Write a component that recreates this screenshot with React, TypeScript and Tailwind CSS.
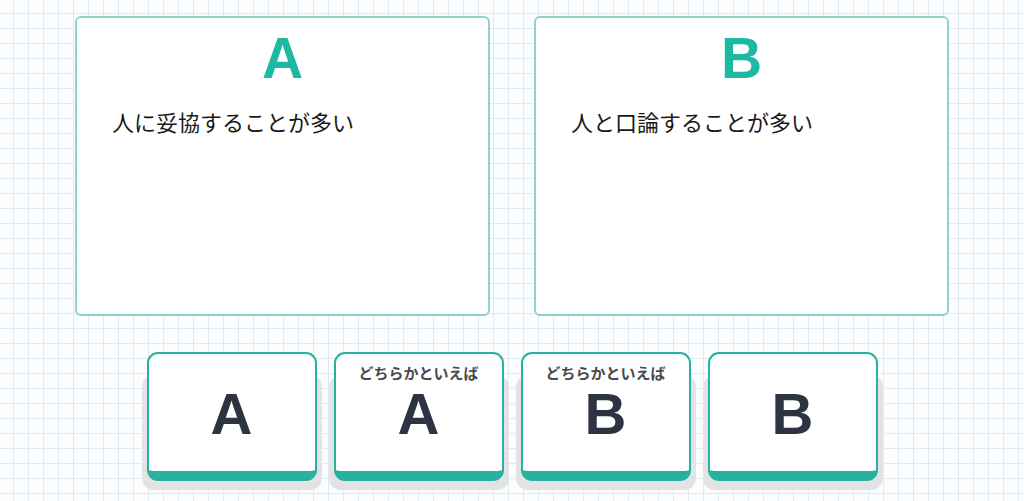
const choices = [
  { letter: "A", label: "" },
  { letter: "A", label: "どちらかといえば" },
  { letter: "B", label: "どちらかといえば" },
  { letter: "B", label: "" },
];

const panels = [
  { letter: "A", text: "人に妥協することが多い" },
  { letter: "B", text: "人と口論することが多い" },
];

export default function App() {
  return (
    <div className="min-h-screen w-full bg-[#fbfdfe] bg-[linear-gradient(to_right,#dfebf1_1px,transparent_1px),linear-gradient(to_bottom,#dfebf1_1px,transparent_1px)] bg-[size:15px_15px] bg-[position:13px_13px] pt-4 font-['Noto_Sans_CJK_JP',sans-serif]">
      <div className="flex justify-center gap-[44px]">
        {panels.map((p) => (
          <div
            key={p.letter}
            className="flex h-[300px] w-[415px] flex-col rounded-[6px] border-2 border-[#8ed3cb] bg-white"
          >
            <div className="pt-[12px] text-center font-['Liberation_Sans',sans-serif] text-[57px] leading-none font-bold text-[#1fb9a3]">
              {p.letter}
            </div>
            <div className="mt-[18px] pl-[35px] text-[22px] leading-[33px] text-[#1a1a1a]">
              {p.text}
            </div>
          </div>
        ))}
      </div>

      <div className="mt-[36px] flex justify-center gap-[17px]">
        {choices.map((c, i) => (
          <div key={i} className="relative h-[129px] w-[170px]">
            <div className="absolute top-[23px] right-[-5px] bottom-[-9px] left-[-5px] rounded-[12px] bg-[#e3e3e3]" />
            <button className="relative flex h-full w-full cursor-pointer flex-col items-center rounded-[11px] border-2 border-b-[10px] border-[#27b1a0] bg-white pt-[9px]">
              <span className="h-[20px] text-[15px] leading-[20px] font-bold text-[#4a4a4a]">
                {c.label}
              </span>
              <span className="mt-[2px] font-['Liberation_Sans',sans-serif] text-[58px] leading-none font-bold text-[#2d3340]">
                {c.letter}
              </span>
            </button>
          </div>
        ))}
      </div>
    </div>
  );
}
